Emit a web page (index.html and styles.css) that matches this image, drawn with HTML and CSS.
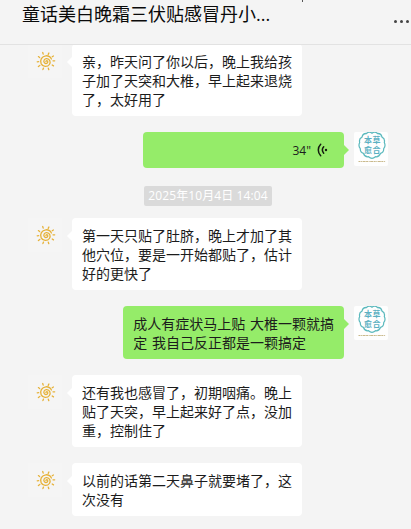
FILE: index.html
```html
<!DOCTYPE html>
<html lang="zh-CN">
<head>
<meta charset="utf-8">
<title>聊天</title>
<link rel="stylesheet" href="styles.css">
</head>
<body>
<svg class="defs" aria-hidden="true">
  <symbol id="sun" viewBox="0 0 34 34">
    <g fill="none" stroke="#e6b23a" stroke-width="1.3" stroke-linecap="round">
      <path d="M18 17.6c-.2-1.2 1.7-1.2 1.8.2.1 1.7-2.1 2.4-3.3 1.1-1.6-1.8-.1-4.5 2.3-4.3 3 .2 4.2 3.6 2.6 5.9-2 2.9-6.6 2.5-8.200-.6-1.700-3.500.6-7.800 4.600-8.100 2.600-.2 4.600 1 5.600 3.200"/>
      <path d="M15.200 10.100l-.5-1.600M20.200 10.400l.7-1.400M24.200 12.700l1.200-.7M25 16.800h1.700M24.200 21l1.300.9M20.300 24.200l.5 1.500M15.500 24.100l-.6 1.500M11.800 21.500l-1.400 1M10.700 17.700l-1.500.1M11.600 13.500l-1.200-.9"/>
    </g>
  </symbol>
  <symbol id="seal" viewBox="0 0 34 34">
    <path fill="none" stroke="#5bb9bd" stroke-width="1.200" transform="translate(0 -1.200) scale(1 1.080)" d="M18 2.200q3-2 5.500.3 3.700-.2 4.500 3.300 3.300 1.500 2.300 5Q32 14 29.700 16.500q.2 3.700-3.200 4.500-1.500 3.500-5 3Q18 27 14.500 24q-3.700.5-5-3-3.400-.8-3.200-4.500Q4 14 5.700 10.800q-1-3.500 2.300-5 .8-3.500 4.500-3.300 2.500-2.300 5.500-.3z"/>
    <path stroke="#c9b98b" stroke-width="1" stroke-dasharray="2 .6 1 .5 3 .5" d="M4.500 29.500h27"/>
  </symbol>
  <symbol id="voice" viewBox="0 0 12 14">
    <g fill="none" stroke="#151d10" stroke-width="1.500" stroke-linecap="round">
      <path d="M3.700 1.300C.5 4.500.5 9.500 3.700 12.700M6.700 3.800c-1.700 2-1.700 4.400 0 6.400"/>
    </g>
    <circle cx="9" cy="7" r="1.200" fill="#151d10"/>
  </symbol>
</svg>

<header class="header">
  <h1 class="title">童话美白晚霜三伏贴感冒丹小...</h1>
  <span class="tick"></span>
  <div class="more"><i></i><i></i><i></i></div>
</header>

<main class="chat">
  <div class="row">
    <svg class="avatar"><use href="#sun"/></svg>
    <div class="bubble">亲，昨天问了你以后，晚上我给孩<br>子加了天突和大椎，早上起来退烧<br>了，太好用了</div>
  </div>
  <div class="row mine">
    <div class="bubble audio"><span>34"</span><svg class="voice"><use href="#voice"/></svg></div>
    <div class="avatar brand"><svg class="seal"><use href="#seal"/></svg><div class="brand-name"><span>本草</span><span>愈合</span></div></div>
  </div>
  <time class="time">2025年10月4日 14:04</time>
  <div class="row">
    <svg class="avatar"><use href="#sun"/></svg>
    <div class="bubble">第一天只贴了肚脐，晚上才加了其<br>他穴位，要是一开始都贴了，估计<br>好的更快了</div>
  </div>
  <div class="row mine">
    <div class="bubble">成人有症状马上贴 大椎一颗就搞<br>定 我自己反正都是一颗搞定</div>
    <div class="avatar brand"><svg class="seal"><use href="#seal"/></svg><div class="brand-name"><span>本草</span><span>愈合</span></div></div>
  </div>
  <div class="row">
    <svg class="avatar"><use href="#sun"/></svg>
    <div class="bubble">还有我也感冒了，初期咽痛。晚上<br>贴了天突，早上起来好了点，没加<br>重，控制住了</div>
  </div>
  <div class="row">
    <svg class="avatar"><use href="#sun"/></svg>
    <div class="bubble">以前的话第二天鼻子就要堵了，这<br>次没有</div>
  </div>
</main>
</body>
</html>
```
FILE: styles.css
```css
* {
  box-sizing: border-box;
}

body {
  margin: 0;
  height: 529px;
  overflow: hidden;
  background: #f4f4f4;
  color: #1c1c1c;
  font-family: "Open Sans", "Noto Sans CJK SC", sans-serif;
}

.defs {
  position: absolute;
  width: 0;
  height: 0;
}

.header {
  position: relative;
  z-index: 1;
  display: flex;
  justify-content: space-between;
  height: 45px;
  padding-left: 22px;
  border-bottom: 1px solid #e2e2e2;
}

.title {
  margin: 0;
  font-size: 18px;
  font-weight: 400;
  line-height: 28px;
  color: #0a0a0a;
  white-space: nowrap;
}

.tick {
  position: absolute;
  left: 302px;
  top: 0;
  width: 1px;
  height: 2px;
  background: #555;
}

.more {
  display: flex;
  gap: 3px;
  padding: 20px 2px 0 0;
}

.more i {
  width: 3px;
  height: 3px;
  border-radius: 50%;
  background: #444;
}

.chat {
  display: flex;
  flex-direction: column;
  gap: 16px;
  margin-top: -1px;
}

.row {
  display: flex;
  align-items: flex-start;
  gap: 10px;
  padding-left: 28px;
}

.row.mine {
  justify-content: flex-end;
  padding: 0 23px 0 0;
}

.avatar {
  flex: none;
  width: 34px;
  height: 34px;
  border-radius: 2px;
  background: #f5f5f5;
}

.brand {
  position: relative;
  background: #fefefe;
}

.seal {
  display: block;
  width: 34px;
  height: 34px;
}

.brand-name {
  position: absolute;
  left: 10px;
  top: 3px;
  display: grid;
  grid-auto-rows: 10px;
  font-family: "Noto Sans CJK SC", sans-serif;
  font-size: 8px;
  font-weight: 700;
  letter-spacing: 0.5px;
  line-height: 10px;
  white-space: nowrap;
  color: #5cb0c2;
}

.bubble {
  position: relative;
  padding: 8px 10px 7px;
  border-radius: 4px;
  background: #fff;
  font-size: 14px;
  line-height: 19px;
  white-space: nowrap;
}

.bubble::before {
  content: "";
  position: absolute;
  left: -5px;
  top: 13px;
  border: 5px solid transparent;
  border-left: 0;
  border-right-color: #fff;
}

.mine .bubble {
  background: #95ec69;
  word-spacing: 1.2px;
}

.mine .bubble::before {
  left: auto;
  right: -5px;
  border: 5px solid transparent;
  border-right: 0;
  border-left-color: #95ec69;
}

.bubble.audio {
  display: flex;
  align-items: center;
  justify-content: flex-end;
  gap: 6px;
  width: 201px;
  height: 36px;
  padding: 0 15px 0 0;
  font-size: 12px;
}

.voice {
  width: 12px;
  height: 14px;
}

.time {
  align-self: center;
  width: 128px;
  height: 20px;
  margin: 2px 0 -4px 5px;
  border-radius: 2px;
  background: #dadada;
  color: #fff;
  font-size: 12px;
  letter-spacing: 0.1px;
  line-height: 20px;
  text-align: center;
  white-space: nowrap;
}
```
